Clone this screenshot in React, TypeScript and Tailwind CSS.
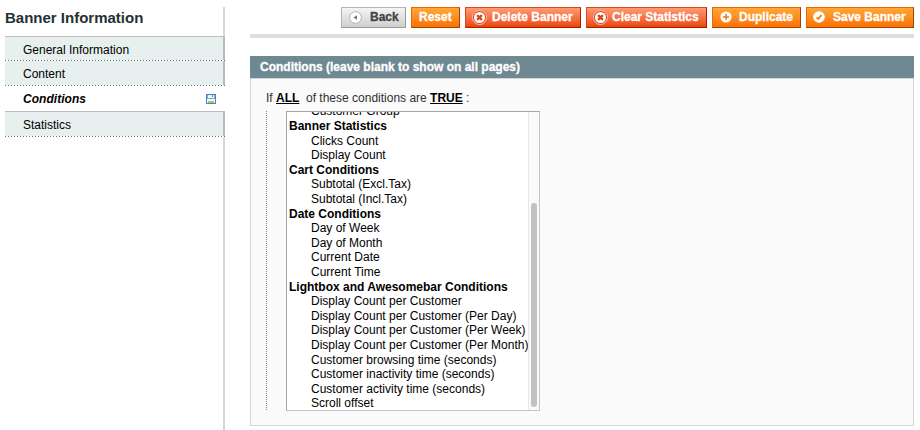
import React from "react";

type Tone = "gray" | "orange" | "red";

const tones: Record<Tone, string> = {
  gray: "border-[#b5b5b5] border-r-[#9a9a9a] border-b-[#9a9a9a] from-[#f5f5f5] to-[#cfcfcf] text-[#444]",
  orange: "border-[#ed6502] border-r-[#a04300] border-b-[#a04300] from-[#ffa835] to-[#fb7000] text-white",
  red: "border-[#d64a20] border-r-[#a92000] border-b-[#a92000] from-[#ff9a70] to-[#ea4400] text-white",
};

function BackIcon() {
  return (
    <svg width="13" height="13" viewBox="0 0 13 13">
      <circle cx="6.5" cy="6.5" r="5.9" fill="#fff" stroke="#b3b3b3" />
      <path d="M4.4 6.5 8 4.3v4.4z" fill="#777" />
    </svg>
  );
}

function CrossIcon() {
  return (
    <svg width="15" height="15" viewBox="0 0 15 15">
      <circle cx="7.5" cy="7.5" r="7" fill="#d9451a" stroke="#ffc5ad" strokeWidth="1" />
      <circle cx="7.5" cy="7.5" r="5.5" fill="#fff" />
      <path d="M5.1 5.1l4.8 4.8M9.9 5.1l-4.8 4.8" stroke="#d9451a" strokeWidth="2.2" />
    </svg>
  );
}

function PlusIcon() {
  return (
    <svg width="12" height="12" viewBox="0 0 12 12">
      <circle cx="6" cy="6" r="5.6" fill="#fff" />
      <path d="M6 3v6M3 6h6" stroke="#f07a12" strokeWidth="1.6" />
    </svg>
  );
}

function CheckIcon() {
  return (
    <svg width="12" height="12" viewBox="0 0 12 12">
      <circle cx="6" cy="6" r="5.8" fill="#fff" />
      <path d="M3.6 6.3l1.6 1.7 3.3-3.9" fill="none" stroke="#f07a12" strokeWidth="1.7" />
    </svg>
  );
}

function SaveIcon() {
  return (
    <svg width="10" height="10" viewBox="0 0 10 10" shapeRendering="crispEdges">
      <rect width="10" height="10" fill="#4f80c4" />
      <rect x="1" y="1" width="8" height="8" fill="#7fa8e0" />
      <rect x="2" y="1" width="6" height="3" fill="#f4f8fd" />
      <rect x="6" y="1" width="1" height="2" fill="#5b8bca" />
      <rect x="1" y="5" width="8" height="4" fill="#f4f8fd" />
      <rect x="2" y="7" width="6" height="2" fill="#9ad05c" />
    </svg>
  );
}

const buttons: { label: string; tone: Tone; size: string; text: string; icon?: React.ReactNode }[] = [
  { label: "Back", tone: "gray", size: "w-[65px] pl-[7px]", text: "ml-2", icon: <BackIcon /> },
  { label: "Reset", tone: "orange", size: "w-[49px] pl-[7px]", text: "" },
  { label: "Delete Banner", tone: "red", size: "w-[116px] pl-[6px]", text: "ml-[5px]", icon: <CrossIcon /> },
  { label: "Clear Statistics", tone: "red", size: "w-[121px] pl-[6px]", text: "ml-1", icon: <CrossIcon /> },
  { label: "Duplicate", tone: "orange", size: "w-[89px] pl-[7px]", text: "ml-[7px]", icon: <PlusIcon /> },
  { label: "Save Banner", tone: "orange", size: "w-[108px] pl-[6px]", text: "ml-2", icon: <CheckIcon /> },
];

const groups = [
  { name: "Banner Statistics", options: ["Clicks Count", "Display Count"] },
  { name: "Cart Conditions", options: ["Subtotal (Excl.Tax)", "Subtotal (Incl.Tax)"] },
  { name: "Date Conditions", options: ["Day of Week", "Day of Month", "Current Date", "Current Time"] },
  {
    name: "Lightbox and Awesomebar Conditions",
    options: [
      "Display Count per Customer",
      "Display Count per Customer (Per Day)",
      "Display Count per Customer (Per Week)",
      "Display Count per Customer (Per Month)",
      "Customer browsing time (seconds)",
      "Customer inactivity time (seconds)",
      "Customer activity time (seconds)",
      "Scroll offset",
    ],
  },
];

const dots = "h-px shrink-0 bg-[repeating-linear-gradient(90deg,#6b7474_0_1px,transparent_1px_3px)]";

function Sidebar() {
  const tab = "flex items-center border-r-2 border-[#b0bebd] bg-[#e7efef] pl-[18px] text-[12px]";
  return (
    <aside className="mt-[7px] ml-[5px] flex h-[423px] w-[220px] shrink-0 flex-col">
      <h3 className="h-[29px] border-r-2 border-[#d8d8d8] text-[15px] leading-[21px] font-bold text-[#253033]">
        Banner Information
      </h3>
      <div className="h-px bg-[#bebebe]" />
      <div className={`${tab} h-[23px] pt-[2px]`}>General Information</div>
      <div className={dots} />
      <div className={`${tab} h-[24px] pt-px`}>Content</div>
      <div className={dots} />
      <div className="flex h-[25px] items-center justify-between pr-[9px] pl-[18px] text-[12px] font-bold italic">
        <span className="tracking-[0.03px]">Conditions</span>
        <SaveIcon />
      </div>
      <div className="h-px bg-[#bebebe]" />
      <div className={`${tab} h-[24px] pt-[2px]`}>Statistics</div>
      <div className={dots} />
      <div className="flex-1 border-r-2 border-[#d8d8d8]" />
    </aside>
  );
}

export default function App() {
  return (
    <div className="flex h-[430px] w-[920px] overflow-hidden bg-white font-['Liberation_Sans',Arial,sans-serif] text-black">
      <Sidebar />
      <main className="ml-[25px] flex w-[664px] flex-col pt-[7px]">
        <div className="flex justify-end gap-[5px]">
          {buttons.map((b) => (
            <button
              key={b.label}
              className={`flex h-[21px] shrink-0 items-center border bg-linear-to-b pb-px text-[12px] font-bold whitespace-nowrap [-webkit-text-stroke:0.3px_currentColor] ${tones[b.tone]} ${b.size}`}
            >
              {b.icon}
              <span className={b.text}>{b.label}</span>
            </button>
          ))}
        </div>
        <div className="mt-[6px] h-1 bg-[#dfdfdf]" />
        <h4 className="mt-[18px] h-[22px] bg-[#6f8992] pl-[10px] text-[12px] leading-[22px] font-bold text-white [-webkit-text-stroke:0.3px_currentColor]">
          Conditions (leave blank to show on all pages)
        </h4>
        <section className="h-[348px] border border-[#d6d6d6] bg-[#fafafa] pl-[15px] text-[12px]">
          <p className="h-[32px] pt-[12px] leading-[15px] whitespace-pre text-[#2f2f2f]">
            If <b className="text-black underline">ALL</b>
            {"  of these conditions are "}
            <b className="text-black underline">TRUE</b> :
          </p>
          <div className="flex">
            <div className="h-[300px] w-px bg-[repeating-linear-gradient(180deg,#888_0_1px,transparent_1px_2px)]" />
            <div className="ml-[19px] flex h-[300px] w-[254px] overflow-hidden border border-t-[#a6a6a6] border-r-[#c4c4c4] border-b-[#c4c4c4] border-l-[#a6a6a6] bg-white">
              <div className="-mt-[7.6px] w-[241px] shrink-0 leading-[14.6px] whitespace-nowrap">
                <div className="pl-6">Customer Group</div>
                {groups.map((g) => (
                  <div key={g.name}>
                    <div className="pl-[2px] font-bold">{g.name}</div>
                    {g.options.map((o) => (
                      <div key={o} className="pl-6">
                        {o}
                      </div>
                    ))}
                  </div>
                ))}
              </div>
              <div className="w-[11px] border-l border-[#e8e8e8] bg-[#fafafa] pt-[91px] pl-[2px]">
                <div className="h-[204px] w-[6px] rounded-full bg-[#c1c1c1]" />
              </div>
            </div>
          </div>
        </section>
      </main>
    </div>
  );
}
